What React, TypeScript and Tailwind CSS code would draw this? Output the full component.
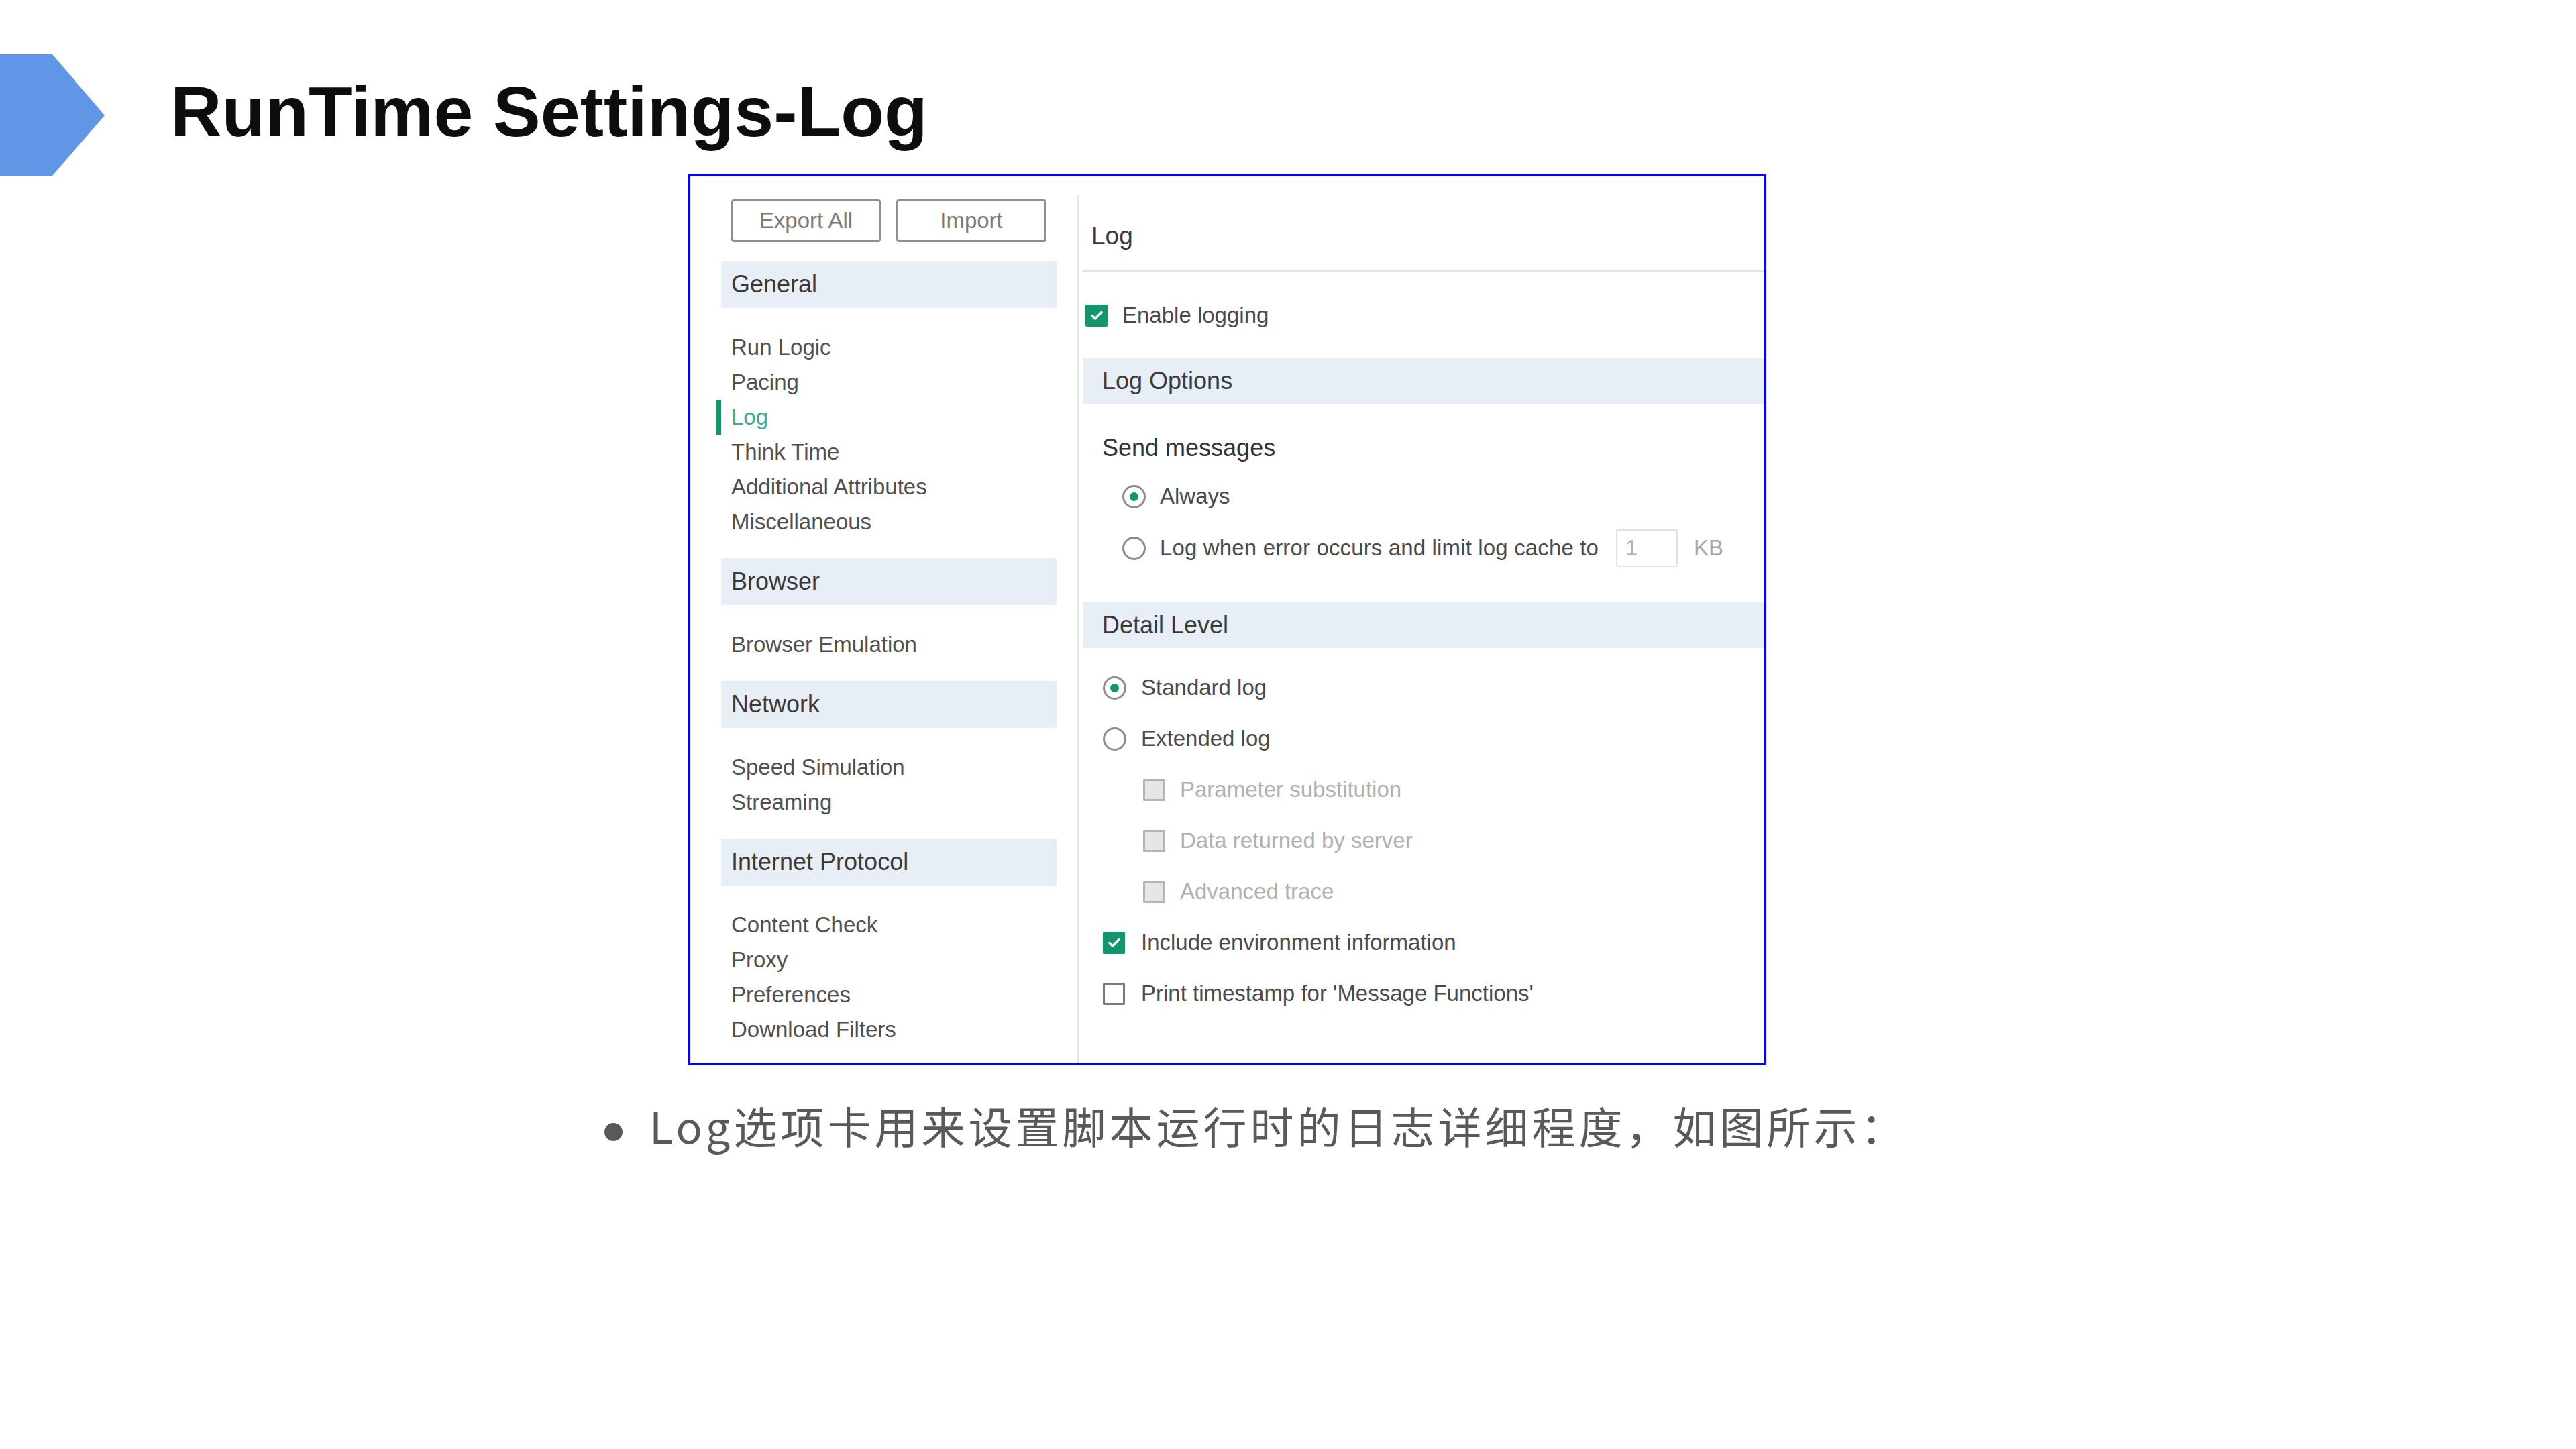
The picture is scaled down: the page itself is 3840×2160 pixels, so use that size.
import React from "react";

const ui = "font-['Liberation_Sans',Arial,sans-serif]";

const sections: { title: string; items: string[] }[] = [
  {
    title: "General",
    items: ["Run Logic", "Pacing", "Log", "Think Time", "Additional Attributes", "Miscellaneous"],
  },
  { title: "Browser", items: ["Browser Emulation"] },
  { title: "Network", items: ["Speed Simulation", "Streaming"] },
  { title: "Internet Protocol", items: ["Content Check", "Proxy", "Preferences", "Download Filters"] },
];

const CheckBox = ({ state }: { state: "on" | "off" | "disabled" }) => {
  if (state === "on") {
    return (
      <span className="flex h-[33px] w-[33px] shrink-0 items-center justify-center rounded-[2px] bg-[#13956e]">
        <svg viewBox="0 0 24 24" className="h-[24px] w-[24px]" fill="none" stroke="white" strokeWidth={3.4} strokeLinecap="round" strokeLinejoin="round">
          <path d="M5 12.5l4.5 4.5L19 7.5" />
        </svg>
      </span>
    );
  }
  return (
    <span
      className={`h-[33px] w-[33px] shrink-0 rounded-[2px] border-[3px] ${
        state === "disabled" ? "border-[#b4b4b4] bg-[#e6e6e6]" : "border-[#7a7a7a] bg-white"
      }`}
    />
  );
};

const Radio = ({ on = false }: { on?: boolean }) => (
  <span className="flex h-[35px] w-[35px] shrink-0 items-center justify-center rounded-full border-[3px] border-[#8c8c8c] bg-white">
    {on && <span className="h-[13px] w-[13px] rounded-full bg-[#13956e]" />}
  </span>
);

const Sidebar = () => (
  <div className="w-[576px] shrink-0 pt-[34px] pl-[46px] pr-[30px]">
    <div className="flex gap-[23px] pl-[15px]">
      <button className="h-[64px] w-[223px] rounded-[4px] border-[3px] border-[#8e8e8e] text-[33px] text-[#7a7a7a]">
        Export All
      </button>
      <button className="h-[64px] w-[224px] rounded-[4px] border-[3px] border-[#8e8e8e] text-[33px] text-[#7a7a7a]">
        Import
      </button>
    </div>

    {sections.map((section, i) => (
      <div key={section.title} className={i === 0 ? "mt-[28px]" : ""}>
        <div className="flex h-[70px] items-center bg-[#e8eef6] pl-[15px] text-[36px] text-[#3a3a3a]">
          {section.title}
        </div>
        <div className="pt-[33px] pb-[28px]">
          {section.items.map((item) =>
            item === "Log" ? (
              <div
                key={item}
                className="-ml-[8px] border-l-[8px] border-[#13956e] pl-[15px] text-[33px] leading-[52px] text-[#38ad8b]"
              >
                {item}
              </div>
            ) : (
              <div key={item} className="pl-[15px] text-[33px] leading-[52px] text-[#505050]">
                {item}
              </div>
            )
          )}
        </div>
      </div>
    ))}
  </div>
);

const Row = ({ children, className = "" }: { children: React.ReactNode; className?: string }) => (
  <div className={`flex h-[56px] items-center text-[33px] text-[#4a4a4a] ${className}`}>{children}</div>
);

const LogPanel = () => (
  <div className="mt-[28px] flex-1 border-l-[3px] border-[#e6e6e6]">
    <div className="ml-[6px] h-[114px] border-b-[3px] border-[#e3e3e3] pl-[13px] pt-[42px] text-[37px] leading-[38px] text-[#3a3a3a]">
      Log
    </div>

    <div className="mt-[39px] ml-[10px] flex h-[52px] items-center gap-[22px] text-[33px] text-[#4a4a4a]">
      <CheckBox state="on" />
      <span>Enable logging</span>
    </div>

    <div className="mt-[38px] ml-[6px] flex h-[68px] items-center bg-[#e8eef6] pl-[29px] text-[36px] text-[#3a3a3a]">
      Log Options
    </div>

    <div className="mt-[40px] ml-[35px] text-[36px] leading-[52px] text-[#333]">Send messages</div>

    <Row className="mt-[18px] ml-[65px] gap-[21px]">
      <Radio on />
      <span>Always</span>
    </Row>
    <Row className="mt-[21px] ml-[65px] gap-[21px]">
      <Radio />
      <span className="tracking-[0.15px]">Log when error occurs and limit log cache to</span>
      <span className="ml-[5px] flex h-[56px] w-[92px] items-center rounded-[3px] border-[2px] border-[#e2e2e2] pl-[12px] text-[#b0b0b0]">
        1
      </span>
      <span className="ml-[3px] text-[#a8a8a8]">KB</span>
    </Row>

    <div className="mt-[53px] ml-[6px] flex h-[68px] items-center bg-[#e8eef6] pl-[29px] text-[36px] text-[#3a3a3a]">
      Detail Level
    </div>

    <div className="mt-[31px] flex flex-col gap-[20px]">
      <Row className="ml-[36px] gap-[22px]">
        <Radio on />
        <span>Standard log</span>
      </Row>
      <Row className="ml-[36px] gap-[22px]">
        <Radio />
        <span>Extended log</span>
      </Row>
      {["Parameter substitution", "Data returned by server", "Advanced trace"].map((label) => (
        <Row key={label} className="ml-[96px] gap-[22px]">
          <CheckBox state="disabled" />
          <span className="text-[#b0b0b0]">{label}</span>
        </Row>
      ))}
      <Row className="ml-[36px] gap-[24px]">
        <CheckBox state="on" />
        <span>Include environment information</span>
      </Row>
      <Row className="ml-[36px] gap-[24px]">
        <CheckBox state="off" />
        <span>Print timestamp for 'Message Functions'</span>
      </Row>
    </div>
  </div>
);

export default function App() {
  return (
    <div className="min-h-screen bg-white pt-[81px]">
      <div className="flex items-start">
        <svg width="156" height="181" viewBox="0 0 156 181" className="shrink-0">
          <polygon points="0,0 78,0 156,91 78,181 0,181" fill="#5f96e5" />
        </svg>
        <h1 className={`${ui} ml-[98px] mt-[32px] text-[106px] font-bold leading-[106px] text-[#0d0d0d]`}>
          RunTime Settings-Log
        </h1>
      </div>

      <div className={`${ui} ml-[1026px] -mt-[2px] flex h-[1328px] w-[1607px] border-[3px] border-[#0000ff] bg-white`}>
        <Sidebar />
        <LogPanel />
      </div>

      <div className="ml-[901px] mt-[49px] flex items-start font-['Noto_Sans_CJK_SC','Noto_Sans',sans-serif]">
        <span className="mt-[37px] h-[27px] w-[27px] shrink-0 rounded-full bg-[#595959]" />
        <p className="ml-[40px] text-[65px] leading-[80px] tracking-[5px] text-[#595959]">
          Log选项卡用来设置脚本运行时的日志详细程度，如图所示：
        </p>
      </div>
    </div>
  );
}
